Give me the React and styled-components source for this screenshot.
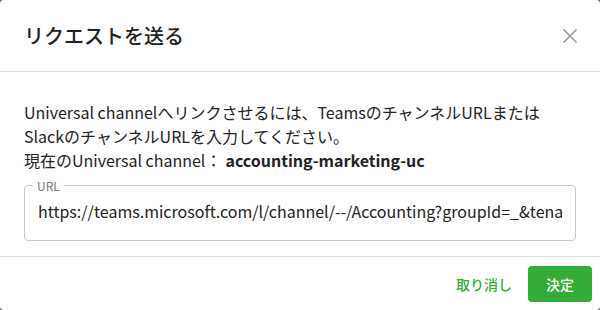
import React from 'react'
import styled, { createGlobalStyle } from 'styled-components'

const GlobalStyle = createGlobalStyle`
  html, body {
    margin: 0;
    padding: 0;
    background: #6b6b6b;
  }
  body {
    font-family: "Noto Sans CJK JP", "Noto Sans", sans-serif;
    color: rgba(0, 0, 0, 0.87);
  }
`

const green = '#34ad36'

const Dialog = styled.div`
  width: 600px;
  height: 310px;
  background: #fff;
  border-radius: 4px;
  display: flex;
  flex-direction: column;
  overflow: hidden;
`

const Header = styled.div`
  height: 72px;
  box-sizing: border-box;
  padding: 0 24px;
  display: flex;
  align-items: center;
  justify-content: space-between;
  border-bottom: 1px solid #e0e0e0;
`

const Title = styled.h2`
  margin: 0;
  font-size: 20px;
  font-weight: 500;
  line-height: 32px;
  color: #222;
`

const CloseButton = styled.button`
  width: 30px;
  height: 30px;
  margin-right: -9px;
  padding: 0;
  border: 0;
  background: none;
  display: flex;
  align-items: center;
  justify-content: center;
  cursor: pointer;
`

const Body = styled.div`
  flex: 1;
  padding: 28px 24px 14px;
  display: flex;
  flex-direction: column;
  gap: 13px;
  border-bottom: 1px solid #e0e0e0;
`

const Message = styled.p`
  margin: 0;
  font-size: 16px;
  line-height: 24px;
  color: #222;
`

const Strong = styled.b`
  font-weight: 700;
  margin-left: 4px;
`

const Field = styled.div`
  position: relative;
  height: 56px;
`

const Outline = styled.fieldset`
  position: absolute;
  inset: -5px 0 0 0;
  margin: 0;
  padding: 0 8px;
  border: 1px solid #c8c8c8;
  border-radius: 4px;
  pointer-events: none;
`

const Legend = styled.legend`
  padding: 0 4px;
  font-size: 12px;
  line-height: 11px;
  color: #777;
`

const Input = styled.input`
  box-sizing: border-box;
  width: 100%;
  height: 56px;
  margin-top: -2px;
  padding: 0 14px;
  border: 0;
  outline: none;
  background: transparent;
  font-family: inherit;
  font-size: 16px;
  color: #222;
`

const Footer = styled.div`
  height: 53px;
  box-sizing: border-box;
  padding: 0 8px;
  display: flex;
  align-items: center;
  justify-content: flex-end;
  gap: 8px;
`

const Button = styled.button`
  height: 36px;
  min-width: 64px;
  border: 0;
  border-radius: 4px;
  font-family: inherit;
  font-size: 14px;
  font-weight: 500;
  cursor: pointer;
  color: ${props => props.primary ? '#fff' : green};
  background: ${props => props.primary ? green : 'transparent'};
  padding: ${props => props.primary ? '0 16px' : '0 8px'};
`

const CloseIcon = () => (
  <svg width="16" height="16" viewBox="0 0 16 16">
    <path d="M1.5 1.5 L14.5 14.5 M14.5 1.5 L1.5 14.5" stroke="#9a9a9a" strokeWidth="1.6" fill="none" />
  </svg>
)

export default function App() {
  return (
    <>
      <GlobalStyle />
      <Dialog>
        <Header>
          <Title>リクエストを送る</Title>
          <CloseButton aria-label='close'><CloseIcon /></CloseButton>
        </Header>
        <Body>
          <Message>
            Universal channelへリンクさせるには、TeamsのチャンネルURLまたは<br />
            SlackのチャンネルURLを入力してください。<br />
            現在のUniversal channel：<Strong>accounting-marketing-uc</Strong>
          </Message>
          <Field>
            <Input defaultValue='https://teams.microsoft.com/l/channel/--/Accounting?groupId=_&tenantId=_' />
            <Outline><Legend>URL</Legend></Outline>
          </Field>
        </Body>
        <Footer>
          <Button>取り消し</Button>
          <Button primary>決定</Button>
        </Footer>
      </Dialog>
    </>
  )
}
